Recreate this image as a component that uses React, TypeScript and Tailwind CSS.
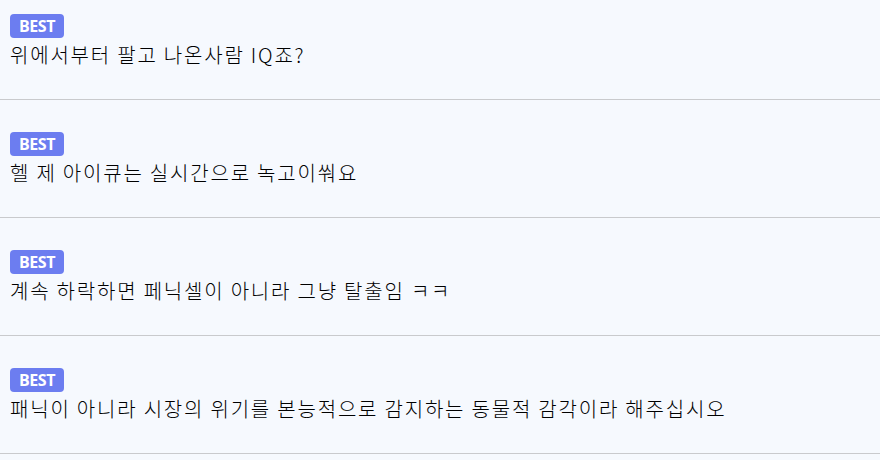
import React from "react";

const comments = [
  "위에서부터 팔고 나온사람 IQ죠?",
  "헬 제 아이큐는 실시간으로 녹고이쒀요",
  "계속 하락하면 페닉셀이 아니라 그냥 탈출임 ㅋㅋ",
  "패닉이 아니라 시장의 위기를 본능적으로 감지하는 동물적 감각이라 해주십시오",
];

export default function App() {
  return (
    <div className="w-[880px] h-[460px] overflow-hidden bg-[#f6f9fe]">
      {comments.map((text, i) => (
        <div
          key={i}
          className="px-[10px] pt-[32px] first:pt-[14px] h-[118px] first:h-[100px] border-b border-[#c9cacd] flex flex-col"
        >
          <span className="self-start h-[24px] w-[54px] rounded-[4px] bg-[#6c7df0] text-white text-[16px] font-bold leading-[24px] text-center font-['Open_Sans',sans-serif] tracking-[-0.4px]">
            BEST
          </span>
          <p className="mt-[3px] text-[20px] leading-[28px] tracking-[1.8px] text-[#000] font-light font-['Noto_Sans_CJK_KR','Noto_Sans',sans-serif]">
            {text}
          </p>
        </div>
      ))}
    </div>
  );
}
